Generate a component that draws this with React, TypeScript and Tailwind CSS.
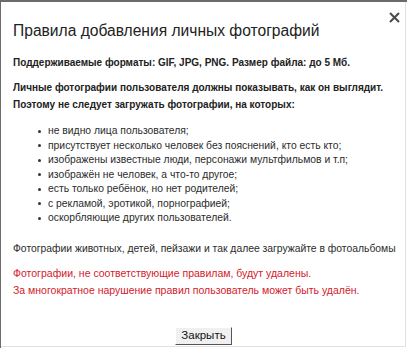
export default function App() {
  const items = [
    'не видно лица пользователя;',
    'присутствует несколько человек без пояснений, кто есть кто;',
    'изображены известные люди, персонажи мультфильмов и т.п;',
    'изображён не человек, а что-то другое;',
    'есть только ребёнок, но нет родителей;',
    'с рекламой, эротикой, порнографией;',
    'оскорбляющие других пользователей.',
  ];

  return (
    <div className="w-[407px] h-[348px] bg-white font-['Liberation_Sans',Arial,sans-serif] text-[#2b2b2b] border-t-2 border-l border-[#6b6b6b] pr-[1px] pb-[1px]">
      <div className="relative h-full flex flex-col border-r border-b border-[#e2e2e2]">
        {/* Close */}
        <button type="button" className="absolute right-[5px] top-[10px] w-[11px] h-[11px] text-[#4a4a4a]">
          <svg viewBox="0 0 11 11" className="w-full h-full" fill="none" stroke="currentColor" strokeWidth="2">
            <path d="M1 1 L10 10 M10 1 L1 10" />
          </svg>
        </button>

        <div className="pl-[12px] pr-2 pt-[19px]">
          <h1 className="text-[15.6px] leading-[20px] text-[#222]">Правила добавления личных фотографий</h1>

          <p className="mt-[15px] text-[10px] leading-[14px] font-bold text-[#222]">
            Поддерживаемые форматы: GIF, JPG, PNG. Размер файла: до 5 Мб.
          </p>

          <p className="mt-[9px] text-[10px] leading-[17px] font-bold text-[#222]">
            Личные фотографии пользователя должны показывать, как он выглядит.
            <br />
            Поэтому не следует загружать фотографии, на которых:
          </p>

          <ul className="mt-[11px] pl-[25px] text-[10.35px] leading-[14.5px]">
            {items.map((t) => (
              <li key={t} className="flex items-center">
                <span className="w-[3px] h-[3px] rounded-full bg-[#333] mr-[7px] shrink-0" />
                {t}
              </li>
            ))}
          </ul>

          <p className="mt-[15px] text-[10.35px] leading-[16px] whitespace-nowrap">
            Фотографии животных, детей, пейзажи и так далее загружайте в фотоальбомы
          </p>

          <p className="mt-[8px] text-[10.5px] leading-[17px] text-[#d4202b]">
            Фотографии, не соответствующие правилам, будут удалены.
            <br />
            За многократное нарушение правил пользователь может быть удалён.
          </p>
        </div>

        <div className="mt-auto pb-[1px] flex justify-center">
          <button
            type="button"
            className="w-[57px] h-[18px] bg-[#f0f0f0] border border-t-white border-l-white border-r-[#555] border-b-[#555] text-[11.5px] leading-none text-[#111] ml-[1px]"
          >
            Закрыть
          </button>
        </div>
      </div>
    </div>
  );
}
